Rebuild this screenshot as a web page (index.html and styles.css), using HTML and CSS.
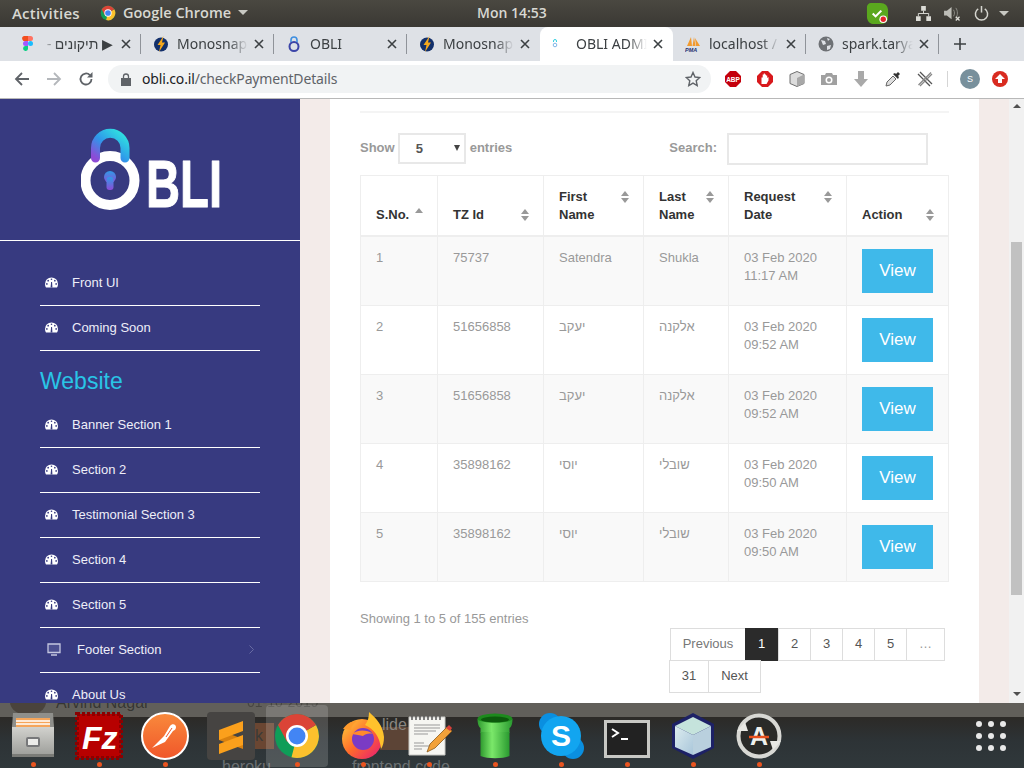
FILE: index.html
```html
<!DOCTYPE html>
<html lang="en">
<head>
    <meta charset="UTF-8">
    <meta name="viewport" content="width=device-width, initial-scale=1.0">
    <title>OBLI ADMIN</title>
    <link rel="stylesheet" href="styles.css">
</head>
<body>
    <svg class="defs" aria-hidden="true">
        <defs>
            <linearGradient id="shackle" x1="0" y1="1" x2="1" y2="0">
                <stop offset="0" stop-color="#8d4bd6"/>
                <stop offset="0.45" stop-color="#2f97ea"/>
                <stop offset="1" stop-color="#2fe6e0"/>
            </linearGradient>
            <linearGradient id="keyhole" x1="0" y1="0" x2="0" y2="1">
                <stop offset="0" stop-color="#2f9be8"/>
                <stop offset="1" stop-color="#8d4bd6"/>
            </linearGradient>
            <linearGradient id="postman" x1="0" y1="0" x2="0" y2="1">
                <stop offset="0" stop-color="#f98a3c"/>
                <stop offset="1" stop-color="#f0562a"/>
            </linearGradient>
            <linearGradient id="foxring" x1="0" y1="0" x2="1" y2="1">
                <stop offset="0" stop-color="#ffd23a"/>
                <stop offset="0.5" stop-color="#ff6a2b"/>
                <stop offset="1" stop-color="#e5167a"/>
            </linearGradient>
            <linearGradient id="pipe" x1="0" y1="0" x2="1" y2="0">
                <stop offset="0" stop-color="#2f9a2f"/>
                <stop offset="0.4" stop-color="#7be86a"/>
                <stop offset="1" stop-color="#2a9a30"/>
            </linearGradient>
            <linearGradient id="cube" x1="0" y1="0" x2="1" y2="1">
                <stop offset="0" stop-color="#dcecef"/>
                <stop offset="1" stop-color="#a9c6da"/>
            </linearGradient>
            <linearGradient id="cabinet" x1="0" y1="0" x2="0" y2="1">
                <stop offset="0" stop-color="#d2d2ce"/>
                <stop offset="1" stop-color="#9a9b97"/>
            </linearGradient>
            <symbol id="close" viewBox="0 0 10 10">
                <path d="M1 1l8 8M9 1l-8 8" stroke="#3c4043" stroke-width="1.6" fill="none"/>
            </symbol>
            <symbol id="gauge" viewBox="0 0 14 11">
                <path d="M7 0a7 7 0 0 1 7 7c0 1.500-.4 2.800-1.100 4H1.100C.4 9.800 0 8.500 0 7a7 7 0 0 1 7-7z" fill="#fff"/>
                <circle cx="7" cy="2" r=".9" fill="#373a80"/>
                <circle cx="3.400" cy="3.500" r=".9" fill="#373a80"/>
                <circle cx="10.600" cy="3.500" r=".9" fill="#373a80"/>
                <circle cx="2" cy="7" r=".9" fill="#373a80"/>
                <circle cx="12" cy="7" r=".9" fill="#373a80"/>
                <path d="M6 11l.6-6h1l.4 6z" fill="#373a80"/>
            </symbol>
            <symbol id="chrome" viewBox="0 0 48 48">
                <circle cx="24" cy="24" r="22" fill="#0f9d58"/>
                <path d="M24 24L43 13A22 22 0 0 1 18.500 45.300z" fill="#fbc02d"/>
                <path d="M24 24L43 13A22 22 0 0 0 5 13L14 29.750z" fill="#db4437"/>
                <circle cx="24" cy="24" r="11" fill="#fff"/>
                <circle cx="24" cy="24" r="8.500" fill="#4285f4"/>
            </symbol>
            <symbol id="monosnap" viewBox="0 0 16 16">
                <circle cx="8" cy="8.500" r="7" fill="#13306b"/>
                <path d="M10.500 0L4.500 9h3l-1.500 7 6-9.500h-3z" fill="#f5a81c"/>
            </symbol>
        </defs>
    </svg>

    <header class="topbar">
        <span class="activities">Activities</span>
        <span class="app-menu">
            <svg class="app-icon"><use href="#chrome"/></svg>
            Google Chrome
            <i class="caret"></i>
        </span>
        <span class="clock">Mon 14:53</span>
        <div class="tray">
            <svg class="tray-check" viewBox="0 0 24 24">
                <path d="M5 1h10c5 0 8 3 8 8v7c0 4-3 7-7 7H9c-5 0-8-3-8-8V5c0-2 2-4 4-4z" fill="#5aa81e"/>
                <path d="M7 12l3 3 6-6" stroke="#fff" stroke-width="2.200" fill="none"/>
                <circle cx="18" cy="18" r="4" fill="#fff"/>
                <circle cx="18" cy="18" r="2.800" fill="#e2252b"/>
            </svg>
            <svg class="tray-net" viewBox="0 0 16 16">
                <path d="M5.500 0h5v5h-5zM0 11h5v5H0zM11 11h5v5h-5z" fill="#dcdcd6"/>
                <path d="M8 5v3M2.500 11V8h11v3" stroke="#dcdcd6" fill="none"/>
            </svg>
            <svg class="tray-vol" viewBox="0 0 18 16">
                <path d="M0 5h3l5-4v13l-5-4H0z" fill="#bdbdb7"/>
                <path d="M10 4c1.500 2 1.500 5 0 7M12.500 2c2.300 3 2.300 8 0 11" stroke="#8e8e88" fill="none"/>
                <path d="M12.500 11.500l4 4M16.500 11.500l-4 4" stroke="#dcdcd6" stroke-width="1.400"/>
            </svg>
            <svg class="tray-power" viewBox="0 0 16 16">
                <path d="M4.500 3A6.500 6.500 0 1 0 11.500 3" stroke="#d6d6d0" stroke-width="1.600" fill="none"/>
                <path d="M8 0v7" stroke="#d6d6d0" stroke-width="1.600"/>
            </svg>
            <i class="caret"></i>
        </div>
    </header>

    <nav class="tabstrip">
        <div class="tab">
            <svg class="favicon" viewBox="0 0 16 16">
                <path d="M4 0h4v5H5.500A2.500 2.500 0 0 1 4 0z" fill="#f24e1e"/>
                <path d="M8 0h2.500a2.500 2.500 0 0 1 0 5H8z" fill="#ff7262"/>
                <path d="M5.500 5H8v5H5.500a2.500 2.500 0 0 1 0-5z" fill="#a259ff"/>
                <circle cx="10.500" cy="7.500" r="2.500" fill="#1abcfe"/>
                <path d="M5.500 10H8v3a2.500 2.500 0 1 1-2.500-3z" fill="#0acf83"/>
            </svg>
            <span class="tab-title title-rtl" dir="rtl">▶ תיקונים - Figma</span>
            <svg class="tab-close"><use href="#close"/></svg>
        </div>
        <div class="tab">
            <svg class="favicon"><use href="#monosnap"/></svg>
            <span class="tab-title">Monosnap</span>
            <svg class="tab-close"><use href="#close"/></svg>
        </div>
        <div class="tab">
            <svg class="favicon" viewBox="0 0 16 16">
                <circle cx="8" cy="10.500" r="4.500" fill="none" stroke="#3c45a8" stroke-width="2"/>
                <path d="M5 6V4a3 3 0 0 1 6 0v2" fill="none" stroke="#3f8fe0" stroke-width="1.600"/>
            </svg>
            <span class="tab-title">OBLI</span>
            <svg class="tab-close"><use href="#close"/></svg>
        </div>
        <div class="tab tab-before-active">
            <svg class="favicon"><use href="#monosnap"/></svg>
            <span class="tab-title">Monosnap</span>
            <svg class="tab-close"><use href="#close"/></svg>
        </div>
        <div class="tab tab-active">
            <svg class="favicon" viewBox="0 0 16 16">
                <circle cx="3" cy="9" r="1.800" fill="none" stroke="#7fb6e8"/>
                <path d="M1.500 6V5a1.500 1.500 0 0 1 3 0v1" fill="none" stroke="#35d0e0"/>
            </svg>
            <span class="tab-title">OBLI ADMIN</span>
            <svg class="tab-close"><use href="#close"/></svg>
        </div>
        <div class="tab">
            <svg class="favicon" viewBox="0 0 16 16">
                <path d="M2 10L6 1l1 9zM7.500 10L9 1l1.500 9zM11 10L10 2l5 8z" fill="#f29a2e"/>
                <text class="pma" x="0" y="15.500">PMA</text>
            </svg>
            <span class="tab-title">localhost / 127</span>
            <svg class="tab-close"><use href="#close"/></svg>
        </div>
        <div class="tab">
            <svg class="favicon" viewBox="0 0 16 16">
                <circle cx="8" cy="8" r="7.500" fill="#6e7175"/>
                <path d="M3 4l4 1 1 3-3 1zM9 10l4-1-1 4-3 1zM9 2l3 1-2 2z" fill="#dee1e6"/>
            </svg>
            <span class="tab-title">spark.taryag</span>
            <svg class="tab-close"><use href="#close"/></svg>
        </div>
        <svg class="new-tab" viewBox="0 0 12 12">
            <path d="M6 0v12M0 6h12" stroke="#3c4043" stroke-width="1.600"/>
        </svg>
    </nav>

    <div class="toolbar">
        <svg class="tool-btn" viewBox="0 0 16 16">
            <path d="M15 8H2M8 2L2 8l6 6" stroke="#5f6368" stroke-width="1.800" fill="none"/>
        </svg>
        <svg class="tool-btn" viewBox="0 0 16 16">
            <path d="M1 8h13M8 2l6 6-6 6" stroke="#b4b7bb" stroke-width="1.800" fill="none"/>
        </svg>
        <svg class="tool-btn" viewBox="0 0 16 16">
            <path d="M13.500 8a5.500 5.500 0 1 1-1.600-3.900" stroke="#5f6368" stroke-width="1.800" fill="none"/>
            <path d="M14.500 1v5.500H9z" fill="#5f6368"/>
        </svg>
        <div class="omnibox">
            <svg class="lock" viewBox="0 0 10 13">
                <path d="M0 5h10v8H0z" fill="#5f6368"/>
                <path d="M2.500 5V3.500a2.500 2.500 0 0 1 5 0V5" stroke="#5f6368" stroke-width="1.300" fill="none"/>
            </svg>
            <span class="url"><b>obli.co.il</b>/checkPaymentDetails</span>
            <svg class="star" viewBox="0 0 16 16">
                <path d="M8 1.500l2 4.500 4.800.5-3.600 3.200 1 4.800L8 12.100l-4.200 2.400 1-4.800L1.200 6.500 6 6z" stroke="#5f6368" stroke-width="1.400" fill="none"/>
            </svg>
        </div>
        <div class="extensions">
            <svg class="ext" viewBox="0 0 16 16">
                <path d="M5 0h6l5 5v6l-5 5H5l-5-5V5z" fill="#c4000c"/>
                <text class="abp" x="8" y="10.500">ABP</text>
            </svg>
            <svg class="ext" viewBox="0 0 16 16">
                <path d="M5 0h6l5 5v6l-5 5H5l-5-5V5z" fill="#d8181c"/>
                <path d="M4.500 13V6.500h1.200V3.500h1.100V2.500h1.100v1h1.100v1h1.200V7l1.300-1v3.500L9.500 13z" fill="#fff"/>
            </svg>
            <svg class="ext" viewBox="0 0 16 16">
                <path d="M8 .5l7 3v9l-7 3-7-3v-9z" fill="#dcdcdc" stroke="#6f6f6f"/>
                <path d="M8 7v8.500L15 12.500v-9z" fill="#a8a8a8"/>
            </svg>
            <svg class="ext" viewBox="0 0 16 16">
                <path d="M0 4h4l1-2h6l1 2h4v10H0z" fill="#a0a0a0"/>
                <circle cx="8" cy="9" r="3.500" fill="#fff"/>
                <circle cx="8" cy="9" r="2" fill="#a0a0a0"/>
            </svg>
            <svg class="ext" viewBox="0 0 16 16">
                <path d="M5 0h6v8h4l-7 8-7-8h4z" fill="#a9a9a9"/>
            </svg>
            <svg class="ext" viewBox="0 0 16 16">
                <path d="M1 15l1-4 6-6 3 3-6 6z" fill="#dedede" stroke="#666"/>
                <path d="M8 3l5 5 1-2-1-1 2-2-2-2-2 2-1-1z" fill="#333"/>
            </svg>
            <svg class="ext" viewBox="0 0 16 16">
                <path d="M1 3l12 12M3 1l12 12" stroke="#555" stroke-width="1.300" fill="none"/>
                <path d="M14 1.500L1.500 14M15 3L3 15" stroke="#888" stroke-width="1.300" fill="none"/>
            </svg>
            <span class="ext-sep"></span>
            <span class="avatar">S</span>
            <svg class="ext ext-last" viewBox="0 0 16 16">
                <circle cx="8" cy="8" r="8" fill="#d92b20"/>
                <path d="M8 3l5 5h-3v4H6V8H3z" fill="#fff"/>
            </svg>
        </div>
    </div>

    <div class="viewport">
        <aside class="sidebar">
            <div class="logo-box">
                <svg class="logo" viewBox="0 0 140 82">
                    <circle cx="29" cy="52.500" r="24.500" fill="none" stroke="#fff" stroke-width="10"/>
                    <path d="M14.500 30V20a14.750 14.750 0 0 1 29.500 0v10" fill="none" stroke="url(#shackle)" stroke-width="9" stroke-linecap="round"/>
                    <circle cx="29" cy="49" r="6" fill="url(#keyhole)"/>
                    <rect x="25.500" y="49" width="7" height="13" rx="3" fill="url(#keyhole)"/>
                    <text class="logo-text" x="65" y="79" textLength="76" lengthAdjust="spacingAndGlyphs">BLI</text>
                </svg>
            </div>
            <ul class="side-nav">
                <li><svg class="gauge"><use href="#gauge"/></svg>Front UI</li>
                <li><svg class="gauge"><use href="#gauge"/></svg>Coming Soon</li>
            </ul>
            <h2 class="side-title">Website</h2>
            <ul class="side-nav">
                <li><svg class="gauge"><use href="#gauge"/></svg>Banner Section 1</li>
                <li><svg class="gauge"><use href="#gauge"/></svg>Section 2</li>
                <li><svg class="gauge"><use href="#gauge"/></svg>Testimonial Section 3</li>
                <li><svg class="gauge"><use href="#gauge"/></svg>Section 4</li>
                <li><svg class="gauge"><use href="#gauge"/></svg>Section 5</li>
                <li class="has-sub">
                    <svg class="monitor" viewBox="0 0 14 13">
                        <path d="M1 1h12v8.500H1z" stroke="#c4c6df" fill="#4c4f90" stroke-width="1.300"/>
                        <path d="M4 12h6" stroke="#c4c6df" stroke-width="1.500"/>
                    </svg>
                    Footer Section
                    <svg class="chevron" viewBox="0 0 5 9">
                        <path d="M.5.5l4 4-4 4" stroke="#686ba3" fill="none"/>
                    </svg>
                </li>
                <li><svg class="gauge"><use href="#gauge"/></svg>About Us</li>
            </ul>
        </aside>

        <main class="card">
            <div class="card-rule"></div>
            <div class="dt-controls">
                <label class="dt-length">
                    Show
                    <span class="dt-select">5<i class="select-arrow"></i></span>
                    entries
                </label>
                <label class="dt-search">
                    Search:
                    <input type="text" class="search-box">
                </label>
            </div>

            <table class="dt">
                <colgroup>
                    <col class="col-no">
                    <col class="col-id">
                    <col class="col-first">
                    <col class="col-last">
                    <col class="col-date">
                    <col class="col-action">
                </colgroup>
                <thead>
                    <tr>
                        <th><div class="th-in sort-up">S.No.</div></th>
                        <th><div class="th-in">TZ Id</div></th>
                        <th><div class="th-in">First Name</div></th>
                        <th><div class="th-in">Last Name</div></th>
                        <th><div class="th-in">Request Date</div></th>
                        <th><div class="th-in">Action</div></th>
                    </tr>
                </thead>
                <tbody>
                    <tr>
                        <td>1</td>
                        <td>75737</td>
                        <td>Satendra</td>
                        <td>Shukla</td>
                        <td>03 Feb 2020<br>11:17 AM</td>
                        <td><a class="btn-view">View</a></td>
                    </tr>
                    <tr>
                        <td>2</td>
                        <td>51656858</td>
                        <td>יעקב</td>
                        <td>אלקנה</td>
                        <td>03 Feb 2020<br>09:52 AM</td>
                        <td><a class="btn-view">View</a></td>
                    </tr>
                    <tr>
                        <td>3</td>
                        <td>51656858</td>
                        <td>יעקב</td>
                        <td>אלקנה</td>
                        <td>03 Feb 2020<br>09:52 AM</td>
                        <td><a class="btn-view">View</a></td>
                    </tr>
                    <tr>
                        <td>4</td>
                        <td>35898162</td>
                        <td>יוסי</td>
                        <td>שובלי</td>
                        <td>03 Feb 2020<br>09:50 AM</td>
                        <td><a class="btn-view">View</a></td>
                    </tr>
                    <tr>
                        <td>5</td>
                        <td>35898162</td>
                        <td>יוסי</td>
                        <td>שובלי</td>
                        <td>03 Feb 2020<br>09:50 AM</td>
                        <td><a class="btn-view">View</a></td>
                    </tr>
                </tbody>
            </table>

            <div class="dt-info">Showing 1 to 5 of 155 entries</div>
            <div class="pager">
                <a class="pg-prev">Previous</a>
                <a class="pg-current">1</a>
                <a>2</a>
                <a>3</a>
                <a>4</a>
                <a>5</a>
                <a class="pg-dots">…</a>
                <a class="pg-wide">31</a>
                <a class="pg-next">Next</a>
            </div>
        </main>

        <div class="scrollbar">
            <i class="arrow-up"></i>
            <span class="thumb"></span>
            <i class="arrow-down"></i>
        </div>
    </div>

    <footer class="dock">
        <span class="ghost-avatar"></span>
        <span class="ghost ghost-name">Arvind Nagar</span>
        <span class="ghost ghost-date">01-10-2019</span>
        <span class="ghost-box ghost-box-a">k</span>
        <span class="ghost-box ghost-box-b">lide</span>
        <span class="ghost ghost-heroku">heroku</span>
        <span class="ghost ghost-code">frontend code</span>

        <div class="dock-item">
            <svg viewBox="0 0 48 48">
                <path d="M4 1h40l1 14H3z" fill="#8f8f8b"/>
                <path d="M7 6h34v12H7z" fill="#f5a55a"/>
                <path d="M7 9h34M7 12h34" stroke="#fff" stroke-width="1.500"/>
                <path d="M3 15h42v30H3z" fill="url(#cabinet)"/>
                <path d="M3 42h42v3H3z" fill="#7a7b77"/>
                <rect x="18" y="26" width="12" height="8" rx="1" fill="#ececea" stroke="#77787a" stroke-width="2"/>
            </svg>
        </div>
        <div class="dock-item">
            <svg viewBox="0 0 48 48">
                <rect x="2" y="2" width="44" height="44" fill="#b70000" stroke="#8c0000" stroke-width="4" stroke-dasharray="3 2"/>
                <text class="fz" x="7" y="37">Fz</text>
            </svg>
        </div>
        <div class="dock-item">
            <svg viewBox="0 0 48 48">
                <circle cx="24" cy="24" r="23" fill="url(#postman)" stroke="#fff" stroke-width="2"/>
                <path d="M11 36l12-12 6-10c2-3 6-2 6 1 0 2-1 3-3 4l-8 11z" fill="#fff"/>
                <path d="M25 25l6-9" stroke="#f0562a"/>
            </svg>
        </div>
        <div class="dock-item dock-sublime">
            <svg viewBox="0 0 48 48">
                <rect width="48" height="48" rx="4" fill="#464442"/>
                <path d="M12 18L36 27V37L12 28z" fill="#d9810f"/>
                <path d="M12 18L36 9V19L12 28z" fill="#fba01c"/>
                <path d="M12 32L36 23V33L12 42z" fill="#fba01c"/>
            </svg>
        </div>
        <div class="dock-item dock-active">
            <svg><use href="#chrome"/></svg>
        </div>
        <div class="dock-item">
            <svg viewBox="0 0 48 48">
                <circle cx="23" cy="27" r="20" fill="url(#foxring)"/>
                <path d="M30 0c8 7 14 14 15 25 0 5-1 9-3 12-1-12-7-20-16-24 3-4 4-8 4-13z" fill="#ffc22c"/>
                <path d="M4 17c4-6 9-8 14-8-4 3-6 6-6 9z" fill="#ff9a2c"/>
                <circle cx="24" cy="27" r="11" fill="#7a3bc4"/>
                <path d="M13 22c5-4 14-5 21 0-4-1-8 0-10 2-3-1-7-1-11-2z" fill="#ff8a2c"/>
            </svg>
        </div>
        <div class="dock-item">
            <svg viewBox="0 0 48 48">
                <path d="M4 5h36v38H4z" fill="#f6f6f2" stroke="#c8c8c4"/>
                <path d="M7 4v4M11 4v4M15 4v4M19 4v4M23 4v4M27 4v4M31 4v4M35 4v4" stroke="#555" stroke-width="1.500"/>
                <path d="M9 13h26M9 16h26M9 19h22M9 22h14M9 31h10M9 34h16M9 37h8" stroke="#999"/>
                <path d="M22 40l3-8 17-17 5 4-17 17z" fill="#f2a23a" stroke="#8a5a1c" stroke-width=".8"/>
                <path d="M41 16l3-3 3 3-2 3z" fill="#d8403a"/>
            </svg>
        </div>
        <div class="dock-item">
            <svg viewBox="0 0 48 48">
                <ellipse cx="24" cy="7" rx="17.500" ry="5.500" fill="#1d8a1d"/>
                <ellipse cx="24" cy="7.500" rx="14" ry="3" fill="#0c5a0c"/>
                <path d="M6.500 7c0 4 1 8 3 9v5h29v-5c2-1 3-5 3-9-3 5-32 5-35 0z" fill="url(#pipe)"/>
                <path d="M9.500 20h29v24c-7 3-22 3-29 0z" fill="url(#pipe)"/>
            </svg>
        </div>
        <div class="dock-item">
            <svg viewBox="0 0 48 48">
                <circle cx="13" cy="12" r="11" fill="#0a8fe0"/>
                <circle cx="36" cy="36" r="11" fill="#0a8fe0"/>
                <circle cx="24" cy="24" r="20" fill="#12a5f0"/>
                <text class="skype" x="24" y="34">S</text>
            </svg>
        </div>
        <div class="dock-item">
            <svg viewBox="0 0 48 48">
                <rect x="1" y="8" width="46" height="38" fill="#c8c8c4"/>
                <rect x="4" y="11" width="40" height="32" fill="#222"/>
                <path d="M9 17l6 4-6 4" stroke="#fff" stroke-width="2" fill="none"/>
                <path d="M18 27h7" stroke="#fff" stroke-width="2"/>
            </svg>
        </div>
        <div class="dock-item">
            <svg viewBox="0 0 48 48">
                <path d="M24 1l21 11v24L24 47 3 36V12z" fill="#1d2166"/>
                <path d="M24 5l18 9-18 9-18-9z" fill="#c5e3dc"/>
                <path d="M6 14l18 9v20L6 35z" fill="url(#cube)"/>
                <path d="M42 14l-18 9v20l18-8z" fill="#b9d0de"/>
            </svg>
        </div>
        <div class="dock-item">
            <svg viewBox="0 0 48 48">
                <circle cx="24" cy="24" r="20.500" fill="#2a2a28" stroke="#d8d8d4" stroke-width="4"/>
                <path d="M2 19l8-9 3 9zM46 29l-8 9-3-9z" fill="#e8e8e4"/>
                <text class="update" x="24" y="33">A</text>
                <path d="M14 25h20" stroke="#e8501e" stroke-width="2.500"/>
            </svg>
        </div>
        <div class="app-grid">
            <i></i><i></i><i></i>
            <i></i><i></i><i></i>
            <i></i><i></i><i></i>
        </div>
    </footer>
</body>
</html>
```

FILE: styles.css
```css
* {
    box-sizing: border-box;
}
html, body {
    margin: 0;
    padding: 0;
}
body {
    width: 1024px;
    height: 768px;
    overflow: hidden;
    display: flex;
    flex-direction: column;
    font-family: "Liberation Sans", Arial, sans-serif;
}
.defs {
    position: absolute;
    width: 0;
    height: 0;
}

/* ubuntu top bar */
.topbar {
    position: relative;
    height: 27px;
    display: flex;
    align-items: center;
    padding: 0 0 2px 12px;
    background: linear-gradient(#4a4841, #3a3833);
    color: #d8d8d2;
    font: 600 15px "Open Sans", sans-serif;
}
.activities {
    width: 88px;
    letter-spacing: .2px;
}
.app-menu {
    display: flex;
    align-items: center;
    gap: 7px;
    font-size: 14.500px;
}
.app-icon {
    width: 16px;
    height: 16px;
}
.caret {
    display: inline-block;
    border-left: 5px solid transparent;
    border-right: 5px solid transparent;
    border-top: 5px solid #c8c8c2;
}
.clock {
    position: absolute;
    left: 477px;
    font-size: 14px;
}
.tray {
    position: absolute;
    right: 0;
    top: 0;
    height: 27px;
    left: 866px;
    display: flex;
    align-items: center;
}
.tray-check {
    width: 23px;
    height: 23px;
}
.tray-net {
    width: 15px;
    height: 15px;
    margin-left: 27px;
}
.tray-vol {
    width: 17px;
    height: 15px;
    margin-left: 13px;
}
.tray-power {
    width: 15px;
    height: 15px;
    margin-left: 13px;
}
.tray .caret {
    margin-left: 10px;
}

/* chrome tabs */
.tabstrip {
    height: 34px;
    display: flex;
    align-items: center;
    padding-left: 8px;
    background: #dee1e6;
}
.tab {
    position: relative;
    width: 133px;
    height: 34px;
    display: flex;
    align-items: center;
    padding: 0 10px 0 12px;
    color: #3c4043;
    font: 14px/18px "Noto Sans", sans-serif;
}
.tab::after {
    content: "";
    position: absolute;
    right: 0;
    top: 7px;
    height: 20px;
    width: 1px;
    background: #8f9399;
}
.tab-before-active::after,
.tab-active::after {
    display: none;
}
.tab-active {
    background: #fff;
    border-radius: 8px 8px 0 0;
}
.favicon {
    width: 16px;
    height: 16px;
    flex: none;
}
.tab-title {
    flex: 1;
    margin: 0 0 0 8px;
    white-space: nowrap;
    overflow: hidden;
    -webkit-mask-image: linear-gradient(to right, #000 68%, transparent 92%);
    mask-image: linear-gradient(to right, #000 68%, transparent 92%);
}
.title-rtl {
    margin: 0 8px 0 4px;
    -webkit-mask-image: linear-gradient(to left, #000 75%, transparent 97%);
    mask-image: linear-gradient(to left, #000 75%, transparent 97%);
}
.tab-close {
    width: 10px;
    height: 10px;
    flex: none;
}
.pma {
    font: italic bold 5.500px "Liberation Sans", sans-serif;
    fill: #25306e;
}
.new-tab {
    width: 12px;
    height: 12px;
    margin-left: 15px;
}

/* address bar */
.toolbar {
    height: 38px;
    display: flex;
    align-items: center;
    padding: 0 0 1px 14px;
    background: #fff;
    border-bottom: 1px solid #b8b8b8;
}
.tool-btn {
    width: 16px;
    height: 16px;
    margin-right: 16px;
}
.omnibox {
    width: 603px;
    height: 28px;
    margin-left: -2px;
    display: flex;
    align-items: center;
    padding: 0 10px 0 13px;
    border-radius: 14px;
    background: #f1f3f4;
}
.lock {
    width: 10px;
    height: 13px;
}
.url {
    flex: 1;
    margin-left: 11px;
    font: 14px/18px "Noto Sans", sans-serif;
    letter-spacing: -.16px;
    color: #5f6368;
}
.url b {
    font-weight: 400;
    color: #202124;
}
.star {
    width: 16px;
    height: 16px;
}
.extensions {
    display: flex;
    align-items: center;
    margin-left: 14px;
}
.ext {
    width: 16px;
    height: 16px;
    margin-right: 16px;
}
.ext-last {
    margin: 0 0 0 12px;
}
.abp {
    font: bold 6.500px "Liberation Sans", sans-serif;
    fill: #fff;
    text-anchor: middle;
}
.ext-sep {
    width: 1px;
    height: 16px;
    margin: 0 12px 0 -2px;
    background: #d5d5d5;
}
.avatar {
    width: 20px;
    height: 20px;
    border-radius: 50%;
    background: #78909c;
    color: #fff;
    font-size: 9px;
    line-height: 20px;
    text-align: center;
}

/* page */
.viewport {
    height: 604px;
    display: flex;
    overflow: hidden;
    background: #f3ebe9;
}
.sidebar {
    width: 300px;
    flex: none;
    background: #373a80;
    color: #eeeef8;
}
.logo-box {
    height: 142px;
    padding: 29px 0 0 81px;
    border-bottom: 1px solid #fff;
}
.logo {
    display: block;
    width: 140px;
    height: 82px;
}
.logo-text {
    font: bold 66px "Liberation Sans", sans-serif;
    fill: #fff;
    stroke: #fff;
    stroke-linejoin: round;
}
.side-nav {
    list-style: none;
    margin: 0 40px;
    padding: 0;
}
.logo-box + .side-nav {
    margin-top: 20px;
}
.side-nav li {
    height: 45px;
    display: flex;
    align-items: center;
    padding: 0 0 2px 5px;
    border-bottom: 1px solid #fff;
    font-size: 13px;
}
.side-nav li:last-child {
    padding-bottom: 2px;
    border-bottom: 0;
}
.logo-box + .side-nav li:last-child {
    border-bottom: 1px solid #fff;
}
.side-title {
    margin: 0 40px;
    height: 52px;
    padding-top: 14px;
    font-size: 23px;
    line-height: 32px;
    font-weight: 400;
    color: #29c5e6;
}
.gauge {
    width: 13px;
    height: 11px;
    margin-right: 14px;
}
.monitor {
    width: 14px;
    height: 13px;
    margin: 0 16px 0 2px;
}
.chevron {
    width: 5px;
    height: 9px;
    margin-left: auto;
    margin-right: 6px;
}
.card {
    width: 649px;
    margin-left: 30px;
    margin-right: 30px;
    padding: 12px 30px 0;
    flex: none;
    background: #fff;
}
.card-rule {
    height: 2px;
    background: #f4f4f4;
}
.dt-controls {
    display: flex;
    justify-content: space-between;
    align-items: flex-start;
    margin: 20px 21px 10px 0;
    color: #999;
    font-size: 13px;
    font-weight: 700;
    line-height: 30px;
}
.dt-length {
    display: flex;
    align-items: flex-start;
    height: 32px;
}
.dt-select {
    position: relative;
    width: 68px;
    height: 31px;
    margin: 0 4px 0 3px;
    padding-left: 16px;
    border: 2px solid #e8e8e8;
    color: #555;
    line-height: 28px;
}
.select-arrow {
    position: absolute;
    right: 4px;
    top: 10px;
    border-left: 3px solid transparent;
    border-right: 3px solid transparent;
    border-top: 6px solid #444;
}
.dt-search {
    display: flex;
    align-items: flex-start;
    gap: 10px;
}
.search-box {
    width: 201px;
    height: 32px;
    border: 2px solid #e8e8e8;
    outline: 0;
}

/* table */
.dt {
    width: 588px;
    table-layout: fixed;
    border-collapse: collapse;
    font-size: 13px;
    line-height: 18px;
}
.col-no { width: 77px; }
.col-id { width: 106px; }
.col-first { width: 100px; }
.col-last { width: 85px; }
.col-date { width: 118px; }
.col-action { width: 102px; }
.dt th,
.dt td {
    border: 1px solid #eee;
    padding: 12px 15px;
    vertical-align: top;
    text-align: left;
}
.dt th {
    padding: 12px 14px 11px 15px;
    vertical-align: bottom;
    border-bottom-width: 2px;
    color: #333;
}
.dt td {
    height: 69px;
    color: #999;
}
.dt tbody tr:nth-child(odd) {
    background: #f9f9f9;
}
.th-in {
    position: relative;
    padding-right: 20px;
}
.th-in::before,
.th-in::after {
    content: "";
    position: absolute;
    right: 0;
    border-left: 4px solid transparent;
    border-right: 4px solid transparent;
}
.th-in::before {
    top: 3px;
    border-bottom: 5px solid #999;
}
.th-in::after {
    top: 10px;
    border-top: 5px solid #999;
}
.sort-up::before {
    top: 2px;
}
.sort-up::after {
    display: none;
}
.btn-view {
    display: block;
    width: 71px;
    height: 44px;
    background: #3fb9ea;
    color: #fff;
    font-size: 17px;
    line-height: 43px;
    text-align: center;
}
.dt-info {
    margin-top: 28px;
    color: #999;
    font-size: 13px;
    line-height: 18px;
}
.pager {
    width: 280px;
    margin: 0 0 0 auto;
    display: flex;
    flex-wrap: wrap;
    font-size: 13px;
}
.pager a {
    width: 33px;
    height: 33px;
    margin: 0 -1px -1px 0;
    border: 1px solid #ddd;
    color: #555;
    line-height: 30px;
    text-align: center;
}
.pager .pg-prev {
    width: 76px;
    margin-left: 1px;
    color: #777;
}
.pager .pg-current {
    margin-right: 0;
    background: #2b2b2b;
    border-color: #2b2b2b;
    color: #fff;
}
.pager .pg-dots {
    width: 39px;
    color: #999;
}
.pager .pg-wide {
    width: 40px;
}
.pager .pg-next {
    width: 53px;
}

/* scrollbar */
.scrollbar {
    width: 15px;
    flex: none;
    position: relative;
    background: #f1f1f1;
}
.thumb {
    position: absolute;
    left: 2px;
    right: 2px;
    top: 143px;
    height: 353px;
    background: #c1c1c1;
}
.arrow-up,
.arrow-down {
    position: absolute;
    left: 4px;
    border-left: 4px solid transparent;
    border-right: 4px solid transparent;
}
.arrow-up {
    top: 5px;
    border-bottom: 4px solid #505050;
}
.arrow-down {
    bottom: 7px;
    border-top: 4px solid #505050;
}

/* ubuntu dock, the wallpaper and a window show faintly through it */
.dock {
    position: relative;
    height: 65px;
    flex: none;
    display: flex;
    background: linear-gradient(#615f5a 0, #615f5a 14px, #2c2a27 14px, #2d3336 38px, #30383b 100%);
    overflow: hidden;
}
.dock-item {
    position: relative;
    width: 66px;
    height: 65px;
    padding: 9px 9px 0;
}
.dock-item svg {
    display: block;
    width: 48px;
    height: 48px;
}
.dock-item::after {
    content: "";
    position: absolute;
    left: 31px;
    bottom: 1px;
    width: 5px;
    height: 5px;
    border-radius: 50%;
    background: #e95420;
}
.dock-active::before {
    content: "";
    position: absolute;
    left: 2px;
    top: 2px;
    width: 62px;
    height: 62px;
    border-radius: 4px;
    background: rgba(255, 255, 255, .16);
}
.dock-active svg {
    position: relative;
}
.dock-sublime::after {
    display: none;
}
.fz {
    font: italic bold 32px "Liberation Sans", sans-serif;
    fill: #fff;
}
.skype {
    font: bold 30px "Liberation Sans", sans-serif;
    fill: #fff;
    text-anchor: middle;
}
.update {
    font: bold 25px "Liberation Sans", sans-serif;
    fill: #f0f0ec;
    text-anchor: middle;
}
.ghost {
    position: absolute;
    font-size: 16px;
    color: rgba(0, 0, 0, .45);
    white-space: nowrap;
}
.ghost-avatar {
    position: absolute;
    left: 10px;
    top: -14px;
    width: 36px;
    height: 26px;
    border-radius: 50%;
    background: #4a433c;
}
.ghost-name {
    left: 56px;
    top: -9px;
}
.ghost-date {
    left: 247px;
    top: -9px;
    font-size: 14px;
    opacity: .6;
}
.ghost-box {
    position: absolute;
    top: 20px;
    height: 26px;
    background: #6a4632;
    color: #3a3a38;
    font-size: 16px;
    line-height: 26px;
}
.ghost-box-a {
    left: 250px;
    width: 24px;
    padding-left: 5px;
}
.ghost-box-b {
    left: 380px;
    width: 30px;
    top: 14px;
    height: 33px;
    padding-left: 2px;
    color: #8a8680;
    line-height: 16px;
    background: linear-gradient(transparent 10px, #5c4436 10px);
}
.ghost-heroku {
    left: 222px;
    top: 55px;
    color: rgba(255, 255, 255, .3);
}
.ghost-code {
    left: 352px;
    top: 55px;
    color: rgba(255, 255, 255, .3);
}
.app-grid {
    position: absolute;
    left: 976px;
    top: 18px;
    display: grid;
    grid-template-columns: repeat(3, 6px);
    gap: 6px;
}
.app-grid i {
    width: 6px;
    height: 6px;
    border-radius: 50%;
    background: #e8e8e8;
}
```
